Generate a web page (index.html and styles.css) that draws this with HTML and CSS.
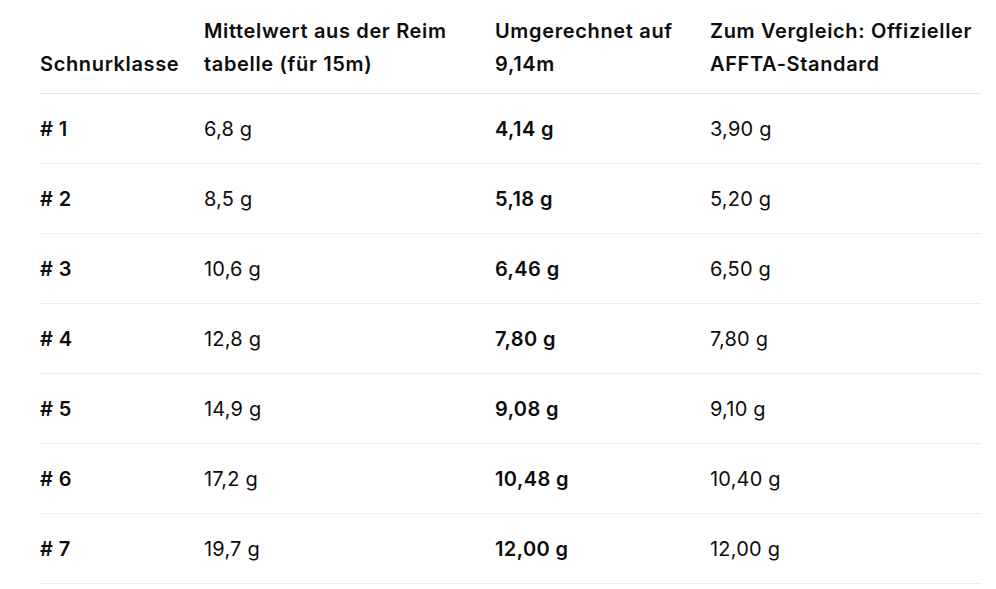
FILE: index.html
```html
<!DOCTYPE html>
<html lang="de">
<head>
<meta charset="utf-8">
<link rel="stylesheet" href="styles.css">
</head>
<body>
<div class="wrap">
<table class="tbl">
  <thead>
    <tr>
      <th class="c1">Schnurklasse</th>
      <th class="c2">Mittelwert aus der Reim tabelle (für 15m)</th>
      <th class="c3">Umgerechnet auf 9,14m</th>
      <th class="c4">Zum Vergleich: Offizieller AFFTA-Standard</th>
    </tr>
  </thead>
  <tbody>
    <tr><td class="b"># 1</td><td>6,8 g</td><td class="b">4,14 g</td><td>3,90 g</td></tr>
    <tr><td class="b"># 2</td><td>8,5 g</td><td class="b">5,18 g</td><td>5,20 g</td></tr>
    <tr><td class="b"># 3</td><td>10,6 g</td><td class="b">6,46 g</td><td>6,50 g</td></tr>
    <tr><td class="b"># 4</td><td>12,8 g</td><td class="b">7,80 g</td><td>7,80 g</td></tr>
    <tr><td class="b"># 5</td><td>14,9 g</td><td class="b">9,08 g</td><td>9,10 g</td></tr>
    <tr><td class="b"># 6</td><td>17,2 g</td><td class="b">10,48 g</td><td>10,40 g</td></tr>
    <tr><td class="b"># 7</td><td>19,7 g</td><td class="b">12,00 g</td><td>12,00 g</td></tr>
  </tbody>
</table>
</div>
</body>
</html>
```
FILE: styles.css
```css
html, body {
  margin: 0;
  padding: 0;
  background: #ffffff;
}
body {
  font-family: Inter, "Noto Sans", sans-serif;
  color: #0d0d0d;
  font-size: 20px;
  letter-spacing: 0.4px;
}
.wrap {
  padding: 15px 15px 0 40px;
}
.tbl {
  width: 941px;
  border-collapse: collapse;
  table-layout: fixed;
}
.tbl th {
  text-align: left;
  vertical-align: bottom;
  font-weight: 600;
  line-height: 33px;
  letter-spacing: 0.65px;
  padding: 0 0 12px 0;
  border-bottom: 1px solid #e3e3e3;
}
.c1 { width: 164px; }
.c2 { width: 291px; }
.c3 { width: 215px; }
.c4 { width: 271px; }
.tbl td {
  line-height: 28px;
  padding: 21px 0 20px 0;
  border-bottom: 1px solid #ececec;
  font-weight: 400;
  letter-spacing: 0.2px;
}
.tbl td.b {
  font-weight: 600;
  letter-spacing: 0.4px;
}
```
